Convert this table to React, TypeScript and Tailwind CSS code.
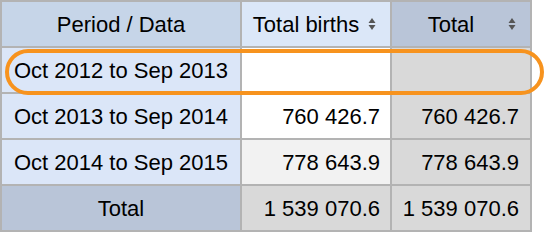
import React from "react";

const rows = [
  { label: "Oct 2012 to Sep 2013", births: "", total: "", bg: "bg-white" },
  { label: "Oct 2013 to Sep 2014", births: "760 426.7", total: "760 426.7", bg: "bg-white" },
  { label: "Oct 2014 to Sep 2015", births: "778 643.9", total: "778 643.9", bg: "bg-[#f2f2f2]" },
];

const SortIcon = () => (
  <svg width="8" height="13" viewBox="0 0 8 13" className="absolute right-[14px] top-1/2 -translate-y-1/2">
    <path d="M4 0.5 L7.5 5.5 L0.5 5.5 Z" fill="#555" />
    <path d="M4 12.5 L7.5 7.5 L0.5 7.5 Z" fill="#555" />
  </svg>
);

export default function App() {
  return (
    <div className="w-[548px] h-[242px] bg-white relative font-['Liberation_Sans',Arial,sans-serif] text-[22px] text-black">
      <table className="border-collapse border-2 border-[#b3b3b3]">
        <thead>
          <tr className="h-[46px]">
            <th className="w-[240px] border-2 border-[#b3b3b3] bg-[#c6d5e8] font-normal text-center">
              Period / Data
            </th>
            <th className="w-[150px] border-2 border-[#b3b3b3] bg-[#dbe7f8] font-normal relative pr-5">
              Total births
              <SortIcon />
            </th>
            <th className="w-[140px] border-2 border-[#b3b3b3] bg-[#b9c5d8] font-normal relative pr-5">
              Total
              <SortIcon />
            </th>
          </tr>
        </thead>
        <tbody>
          {rows.map((r) => (
            <tr key={r.label} className="h-[46px]">
              <td className="border-2 border-[#b3b3b3] bg-[#dbe6f8] text-center">{r.label}</td>
              <td className={`border-2 border-[#b3b3b3] ${r.bg} text-right pr-[10px]`}>{r.births}</td>
              <td className="border-2 border-[#b3b3b3] bg-[#d9d9d9] text-right pr-[11px]">{r.total}</td>
            </tr>
          ))}
          <tr className="h-[46px]">
            <td className="border-2 border-[#b3b3b3] bg-[#b9c5d8] text-center">Total</td>
            <td className="border-2 border-[#b3b3b3] bg-[#d9d9d9] text-right pr-[10px]">1 539 070.6</td>
            <td className="border-2 border-[#b3b3b3] bg-[#d9d9d9] text-right pr-[11px]">1 539 070.6</td>
          </tr>
        </tbody>
      </table>
      <div className="absolute left-[5px] top-[49px] w-[539px] h-[46px] rounded-full border-4 border-[#f7931e]" />
    </div>
  );
}
